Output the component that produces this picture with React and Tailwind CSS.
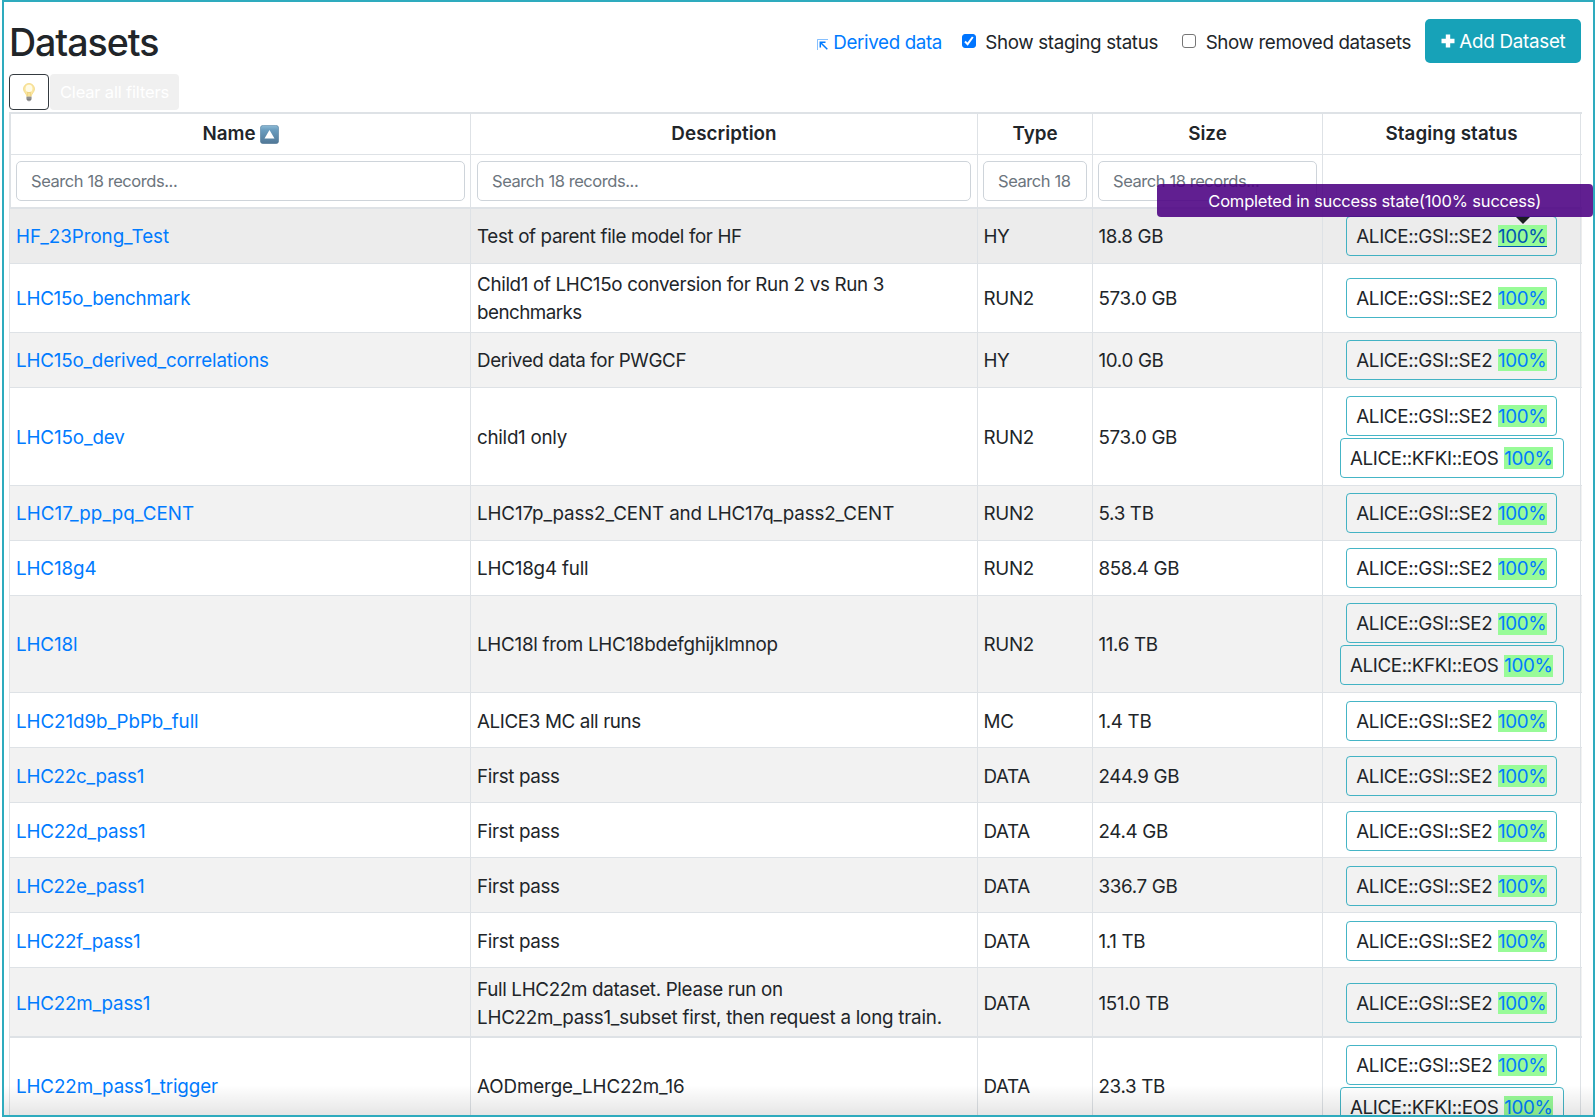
import React from "react";

const rows = [
  { name: "HF_23Prong_Test", nt: "tracking-[-0.003em]", desc: [["Test of parent file model for HF", "tracking-[-0.019em]"]], type: "HY", size: "18.8 GB", h: "h-[55px] border-b", hover: true, up: true },
  { name: "LHC15o_benchmark", nt: "tracking-[-0.012em]", desc: [["Child1 of LHC15o conversion for Run 2 vs Run 3", "tracking-[-0.0175em]"], ["benchmarks", "tracking-[-0.028em]"]], type: "RUN2", size: "573.0 GB", h: "h-[69px] border-b", up: true },
  { name: "LHC15o_derived_correlations", nt: "tracking-[-0.010em]", desc: [["Derived data for PWGCF", "tracking-[-0.021em]"]], type: "HY", size: "10.0 GB", h: "h-[55px] border-b", up: true },
  { name: "LHC15o_dev", nt: "tracking-[-0.006em]", desc: [["child1 only", "tracking-[-0.014em]"]], type: "RUN2", size: "573.0 GB", h: "h-[97.5px] border-b", two: true },
  { name: "LHC17_pp_pq_CENT", nt: "tracking-[0.004em]", desc: [["LHC17p_pass2_CENT and LHC17q_pass2_CENT", "tracking-[-0.006em]"]], type: "RUN2", size: "5.3 TB", h: "h-[55px] border-b" },
  { name: "LHC18g4", nt: "tracking-[-0.006em]", desc: [["LHC18g4 full", "tracking-[-0.010em]"]], type: "RUN2", size: "858.4 GB", h: "h-[55px] border-b" },
  { name: "LHC18l", nt: "tracking-[-0.006em]", desc: [["LHC18l from LHC18bdefghijklmnop", "tracking-[-0.014em]"]], type: "RUN2", size: "11.6 TB", h: "h-[97.5px] border-b", two: true },
  { name: "LHC21d9b_PbPb_full", nt: "tracking-[-0.004em]", desc: [["ALICE3 MC all runs", "tracking-[-0.020em]"]], type: "MC", size: "1.4 TB", h: "h-[55px] border-b" },
  { name: "LHC22c_pass1", nt: "tracking-[-0.012em]", desc: [["First pass", "tracking-[-0.019em]"]], type: "DATA", size: "244.9 GB", h: "h-[55px] border-b" },
  { name: "LHC22d_pass1", nt: "tracking-[-0.010em]", desc: [["First pass", "tracking-[-0.019em]"]], type: "DATA", size: "24.4 GB", h: "h-[55px] border-b" },
  { name: "LHC22e_pass1", nt: "tracking-[-0.012em]", desc: [["First pass", "tracking-[-0.019em]"]], type: "DATA", size: "336.7 GB", h: "h-[55px] border-b" },
  { name: "LHC22f_pass1", nt: "tracking-[-0.010em]", desc: [["First pass", "tracking-[-0.019em]"]], type: "DATA", size: "1.1 TB", h: "h-[55px] border-b" },
  { name: "LHC22m_pass1", nt: "tracking-[-0.010em]", desc: [["Full LHC22m dataset. Please run on", "tracking-[-0.017em]"], ["LHC22m_pass1_subset first, then request a long train.", "tracking-[-0.012em]"]], type: "DATA", size: "151.0 TB", h: "h-[70px] border-b-2" },
  { name: "LHC22m_pass1_trigger", nt: "tracking-[-0.006em]", desc: [["AODmerge_LHC22m_16", "tracking-[-0.006em]"]], type: "DATA", size: "23.3 TB", h: "h-[97.5px] border-b", two: true, up: true },
];

const grid = "grid grid-cols-[461px_507px_115px_230px_258px]";
const cell = "flex min-w-0 items-center border-r border-[#dee2e6] whitespace-nowrap";

function Tooltip() {
  return (
    <span className="absolute -right-[46px] bottom-[30px] z-10 flex h-[33px] w-[436px] items-center justify-center rounded-[4px] bg-[#4b0082]/88 text-[16.5px] tracking-[-0.011em] text-white">
      Completed in success state(100% success)
      <span className="absolute top-full right-[63px] border-x-[7px] border-t-[7px] border-x-transparent border-t-[#1b1e21]" />
    </span>
  );
}

function Badge({ site, wide, hover }) {
  return (
    <div className={`flex h-[40px] shrink-0 items-center justify-between rounded-[4px] border border-[#17a2b8]/80 px-[9.5px] ${wide ? "w-[224px]" : "w-[211.500px]"}`}>
      <span className={`pt-[2px] ${wide ? "tracking-[-0.020em]" : "tracking-[-0.018em]"}`}>{site}</span>
      <a className={`relative mt-px flex h-[22px] w-[49px] items-center justify-center bg-[#98fb98] tracking-[-0.02em] ${hover ? "text-[#0056b3] shadow-[inset_0_-1px_#0056b3]" : "text-[#007bff]"}`}>
        <span className="pt-px">100%</span>
        {hover && <Tooltip />}
      </a>
    </div>
  );
}

function Search({ label = "Search 18 records..." }) {
  return (
    <div className="flex h-[40px] w-full items-center overflow-hidden rounded-[5px] border border-[#ced4da] bg-white px-[14px] text-[16.5px] tracking-[-0.026em] text-[#6c757d]">
      {label}
    </div>
  );
}

function Bulb() {
  return (
    <svg width="12" height="19" viewBox="0 0 12 19">
      <path d="M6 .5C2.7.5.5 3 .5 6c0 2.300 1.600 3.600 2.500 5.200.4.700.6 1.800.8 2.300h4.400c.2-.5.400-1.600.8-2.300.9-1.600 2.500-2.900 2.500-5.200C11.500 3 9.300.5 6 .5Z" fill="#fbe7a1" stroke="#f0d47d" strokeWidth=".7" />
      <ellipse cx="6" cy="5.500" rx="3.400" ry="3.800" fill="#fffbe6" />
      <path d="M4.700 13V9l1.300 1 1.300-1v4" fill="none" stroke="#e5c468" strokeWidth=".6" />
      <path d="M3.500 13.500h5v3L7 18.300H5l-1.500-1.800Z" fill="#a8a8a8" />
      <path d="M3.500 15h5M4 16.700h4" stroke="#666" strokeWidth=".7" />
    </svg>
  );
}

function SortUp() {
  return (
    <svg width="19" height="19" viewBox="0 0 19 19">
      <defs>
        <linearGradient id="sortFill" x1="0" y1="0" x2="0" y2="1">
          <stop offset="0" stopColor="#8ebbd6" />
          <stop offset=".25" stopColor="#6b9dbf" />
          <stop offset="1" stopColor="#507796" />
        </linearGradient>
      </defs>
      <rect x=".3" y=".3" width="18.400" height="18.400" rx="3" fill="url(#sortFill)" stroke="#547a98" strokeWidth=".5" />
      <path d="M9.500 5 14.500 13.500h-10Z" fill="#fff" />
    </svg>
  );
}

function Checkbox({ checked }) {
  return (
    <span className={`flex size-[14px] shrink-0 items-center justify-center rounded-[3px] border ${checked ? "border-[#0075ff] bg-[#0075ff]" : "border-[#767676] bg-white"}`}>
      {checked && (
        <svg width="12" height="12" viewBox="0 0 12 12" fill="none" stroke="#fff" strokeWidth="2" className="shrink-0">
          <path d="m2 6.500 2.600 2.600L9.800 2" />
        </svg>
      )}
    </span>
  );
}

export default function App() {
  return (
    <div className="h-[1118px] w-[1596px] overflow-hidden bg-white pl-[2px] font-['Inter',sans-serif] text-[18.8px] leading-[28px] text-[#212529]">
      <div className="relative h-[1117px] w-[1593px] overflow-hidden border-2 border-[#2eabbe] pl-[5px]">
        <header className="flex h-[70px] w-[1573px] items-center justify-between pt-[10px]">
          <h1 className="pt-[2px] text-[37.6px] leading-[44px] font-medium tracking-[-0.028em]">Datasets</h1>
          <div className="flex items-center whitespace-nowrap">
            <a className="flex w-[125px] items-center justify-between pt-[2px] text-[#007bff]">
              <svg width="11" height="11" viewBox="0 0 11 11" fill="none" stroke="currentColor" className="mt-[3px]">
                <path d="M.5 11V.5H11" strokeWidth=".8" opacity=".6" />
                <path d="M10.300 10.300 3.500 3.500M3.300 8.500V3.300h5.200" strokeWidth="1.500" />
              </svg>
              <span className="tracking-[-0.020em]">Derived data</span>
            </a>
            <label className="ml-[20px] flex w-[196px] items-center justify-between pt-[2px] tracking-[-0.018em]">
              <span className="-mt-[5px]"><Checkbox checked /></span>
              Show staging status
            </label>
            <label className="ml-[24px] flex w-[229px] items-center justify-between pt-[2px] tracking-[-0.020em]">
              <span className="-mt-[5px]"><Checkbox /></span>
              Show removed datasets
            </label>
            <button className="-mt-[3px] mr-px ml-[14px] flex h-[44px] w-[156px] items-center justify-between rounded-[5px] bg-[#17a2b8] px-[15.5px] text-white">
              <svg width="14" height="14" viewBox="0 0 14 14" fill="#fff"><path d="M4.800.5h4.400v4.300h4.300v4.400H9.200v4.300H4.800V9.200H.5V4.800h4.300Z" /></svg>
              <span className="pt-[2px] tracking-[-0.014em]">Add Dataset</span>
            </button>
          </div>
        </header>

        <div className="mt-[2px] flex h-[36px] gap-px">
          <div className="flex w-[40px] items-center justify-center rounded-[4px] border border-[#343a40]"><Bulb /></div>
          <div className="flex w-[129px] items-center justify-center rounded-[4px] bg-[#f0f0f0] text-[16.5px] tracking-[-0.010em] whitespace-nowrap text-white">Clear all filters</div>
        </div>

        <div className="mt-[2px] w-[1573px] border-t-2 border-l-2 border-[#dee2e6]">
          <div className={`${grid} -ml-px h-[41px] border-b border-[#dee2e6] font-semibold`}>
            <div className={`${cell} justify-center gap-[4px] pl-px`}>Name <SortUp /></div>
            <div className={`${cell} justify-center tracking-[0.003em]`}>Description</div>
            <div className={`${cell} justify-center`}>Type</div>
            <div className={`${cell} justify-center`}>Size</div>
            <div className={`${cell} justify-center tracking-[0.006em]`}>Staging status</div>
          </div>
          <div className={`${grid} -ml-px h-[54px] border-b-2 border-[#dee2e6]`}>
            <div className={`${cell} pr-[5px] pl-[6px]`}><Search /></div>
            <div className={`${cell} px-[6px]`}><Search /></div>
            <div className={`${cell} px-[5px]`}><Search label="Search 18" /></div>
            <div className={`${cell} px-[5px]`}><Search /></div>
            <div className={cell} />
          </div>
          {rows.map((r, i) => {
            const pad = r.up ? "pt-px" : "pt-[3px]";
            return (
              <div key={r.name} className={`${grid} -ml-px border-[#dee2e6] ${r.h} ${r.hover ? "bg-[#ececec]" : i % 2 ? "bg-white" : "bg-[#f2f2f2]"}`}>
                <div className={`${cell} ${pad} pl-[6px] text-[#007bff] ${r.nt}`}>{r.name}</div>
                <div className={`${cell} ${pad} pl-[6px]`}>
                  <div>{r.desc.map(([line, tracking]) => <div key={line} className={tracking}>{line}</div>)}</div>
                </div>
                <div className={`${cell} ${pad} pl-[5.5px] tracking-[-0.018em]`}>{r.type}</div>
                <div className={`${cell} ${pad} pl-[5.5px] tracking-[-0.018em]`}>{r.size}</div>
                <div className={`${cell} flex-col justify-center gap-[2px] ${r.up ? "pb-px" : "pt-px"}`}>
                  <Badge site="ALICE::GSI::SE2" hover={r.hover} />
                  {r.two && <Badge site="ALICE::KFKI::EOS" wide />}
                </div>
              </div>
            );
          })}
        </div>
        <div className="pointer-events-none absolute inset-x-0 bottom-0 h-[30px] bg-gradient-to-b from-transparent to-black/10" />
      </div>
    </div>
  );
}
